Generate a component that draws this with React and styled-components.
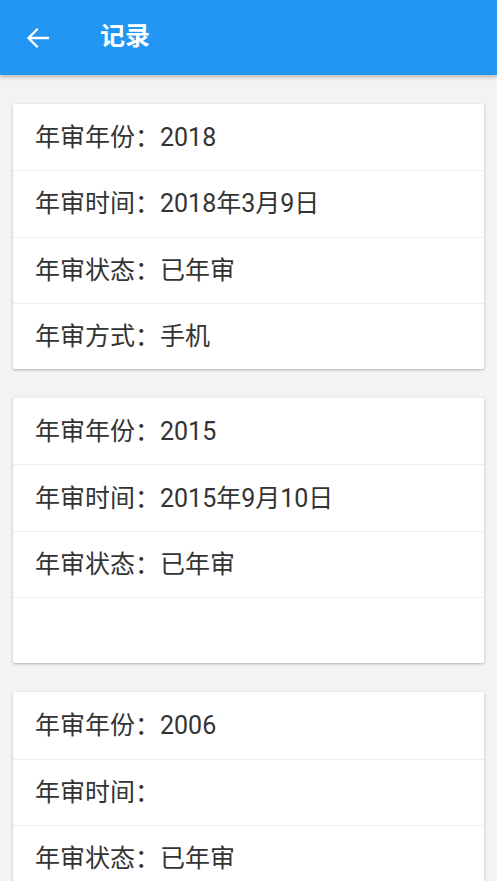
import React from 'react';
import styled, { createGlobalStyle } from 'styled-components';

const GlobalStyle = createGlobalStyle`
  html, body {
    margin: 0;
    padding: 0;
    background: #f3f3f3;
    font-family: Roboto, "Noto Sans CJK SC", sans-serif;
  }
`;

const Page = styled.div`
  width: 497px;
  height: 881px;
  background: #f3f3f3;
  overflow: hidden;
`;

const Header = styled.header`
  height: 75px;
  background: #2196f3;
  display: flex;
  align-items: center;
  padding-left: 21px;
  gap: 45px;
  box-shadow: 0 2px 4px rgba(0, 0, 0, 0.25);
  position: relative;
`;

const Back = styled.svg`
  width: 34px;
  height: 34px;
  display: block;
`;

const Title = styled.h1`
  margin: 0 0 6px;
  color: #fff;
  font-size: 25px;
  line-height: 1;
  font-weight: bold;
  font-family: "Noto Sans CJK SC", sans-serif;
`;

const List = styled.div`
  display: flex;
  flex-direction: column;
  gap: 29px;
  padding: 29px 13px 0;
`;

const Card = styled.div`
  background: #fff;
  border-radius: 2px;
  box-shadow: 0 1px 3px rgba(0, 0, 0, 0.28);
`;

const Row = styled.div`
  box-sizing: border-box;
  height: 66.3px;
  display: flex;
  align-items: center;
  padding: 0 0 5px 22px;
  font-size: 25px;
  color: #333;
  font-family: Roboto, "Noto Sans CJK SC", sans-serif;
  & + & {
    border-top: 1px solid #eeeeee;
  }
`;

const records = [
  { year: '2018', time: '2018年3月9日', status: '已年审', way: '手机' },
  { year: '2015', time: '2015年9月10日', status: '已年审', way: null },
  { year: '2006', time: '', status: '已年审', way: null },
];

export default function App() {
  return (
    <Page>
      <GlobalStyle />
      <Header>
        <Back viewBox="0 0 24 24">
          <path d="M19.8 12H5.6M11.8 5.5 5.3 12l6.5 6.5" fill="none" stroke="#fff" strokeWidth="1.6" />
        </Back>
        <Title>记录</Title>
      </Header>
      <List>
        {records.map((r, i) => (
          <Card key={i}>
            <Row>年审年份：{r.year}</Row>
            <Row>年审时间：{r.time}</Row>
            <Row>年审状态：{r.status}</Row>
            <Row>{r.way ? `年审方式：${r.way}` : ''}</Row>
          </Card>
        ))}
      </List>
    </Page>
  );
}
